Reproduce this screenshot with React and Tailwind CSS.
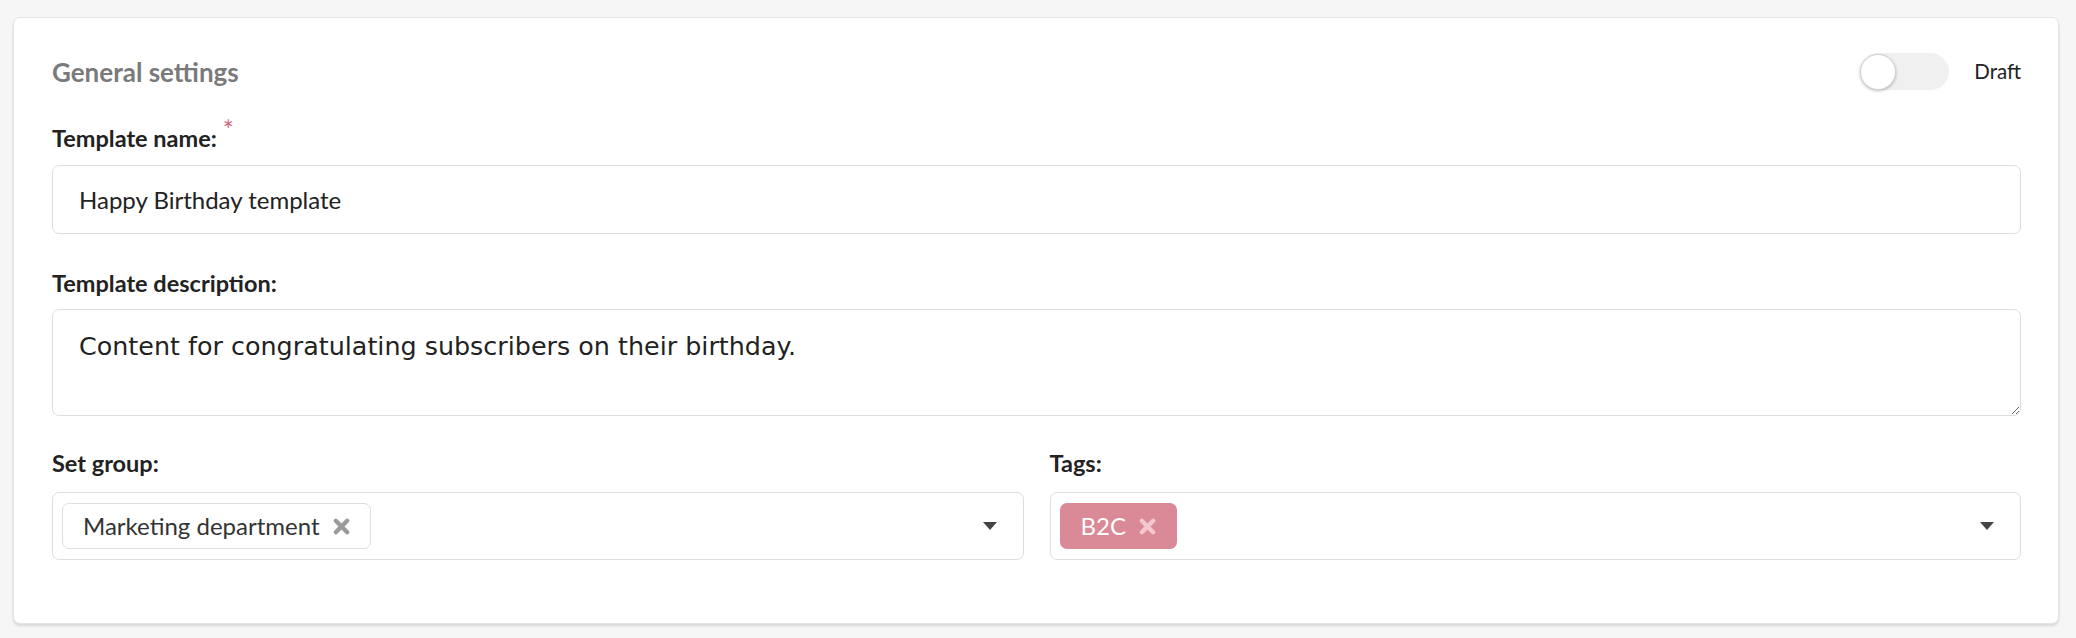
import React, { useState } from 'react';

const font = { fontFamily: 'Lato, "Open Sans", sans-serif' };

const TimesIcon = ({ className }) => (
  <svg viewBox="0 0 20 20" className={className} fill="none" stroke="currentColor" strokeWidth="4.6" strokeLinecap="round">
    <path d="M4 4 L16 16 M16 4 L4 16" />
  </svg>
);

const Caret = () => (
  <svg viewBox="0 0 14 8" className="w-[14px] h-[8px] text-[#444]" fill="currentColor">
    <path d="M0 0 H14 L7 8 Z" />
  </svg>
);

const Field = ({ label, required, children }) => (
  <div>
    <div className="flex items-start h-[30px] text-[23.5px] leading-[30px] font-bold text-[#222]">
      {label}
      {required && <span className="ml-[6px] text-[#d4657a] text-[26px] leading-[26px] -mt-[6px] font-normal">*</span>}
    </div>
    {children}
  </div>
);

const MultiSelect = ({ children }) => (
  <div className="mt-[14px] h-[68px] flex items-center justify-between border border-[#dedede] rounded-[7px] bg-white pl-[9px] pr-[26px]">
    <div className="flex items-center">{children}</div>
    <Caret />
  </div>
);

export default function App() {
  const [draft, setDraft] = useState(false);

  return (
    <div className="min-h-[638px] bg-[#f6f6f6] pt-[17px] pl-[13px] pr-[17px] pb-[15px]" style={font}>
      <div className="bg-white rounded-[7px] border border-[#e4e4e4] shadow-[0_2px_3px_rgba(0,0,0,0.12)] pt-[35px] pl-[38px] pr-[37px] pb-[63px]">
        <div className="flex items-center justify-between h-[37px]">
          <h2 className="text-[26px] font-bold text-[#7a7a7a] leading-none">General settings</h2>
          <div className="flex items-center gap-[25px]">
            <button
              onClick={() => setDraft(!draft)}
              className={`relative w-[89px] h-[37px] rounded-full ${draft ? 'bg-[#da8a96]' : 'bg-[#f0f0f0]'}`}
            >
              <span
                className={`absolute top-[0.5px] ${draft ? 'left-[53px]' : 'left-0'} w-[36px] h-[36px] rounded-full bg-white border border-[#d4d4d4] shadow-[0_1px_3px_rgba(0,0,0,0.25)]`}
              />
            </button>
            <span className="text-[20.5px] text-[#222]">Draft</span>
          </div>
        </div>

        <div className="mt-[33px]">
          <Field label="Template name:" required>
            <div className="mt-[12px] h-[69px] flex items-center border border-[#dedede] rounded-[7px] px-[26px] text-[24px] text-[#222]">
              Happy Birthday template
            </div>
          </Field>
        </div>

        <div className="mt-[34px]">
          <Field label="Template description:">
            <textarea
              defaultValue="Content for congratulating subscribers on their birthday."
              className="mt-[11px] block w-full h-[107px] border border-[#dedede] rounded-[7px] px-[26px] pt-[17px] text-[25.4px] text-[#222] outline-none"
              style={{ fontFamily: '"DejaVu Sans", sans-serif' }}
            />
          </Field>
        </div>

        <div className="mt-[32px] grid grid-cols-2 gap-[26px]">
          <Field label="Set group:">
            <MultiSelect>
              <span className="h-[46px] flex items-center gap-[12px] border border-[#dedede] rounded-[7px] pl-[20px] pr-[19px] text-[24px] text-[#333]">
                Marketing department
                <TimesIcon className="w-[19px] h-[19px] text-[#9a9a9a]" />
              </span>
            </MultiSelect>
          </Field>
          <Field label="Tags:">
            <MultiSelect>
              <span className="h-[46px] flex items-center gap-[12px] rounded-[7px] bg-[#da8a96] pl-[21px] pr-[20px] text-[24px] text-white">
                B2C
                <TimesIcon className="w-[19px] h-[19px] text-[#f3c9cf]" />
              </span>
            </MultiSelect>
          </Field>
        </div>
      </div>
    </div>
  );
}
